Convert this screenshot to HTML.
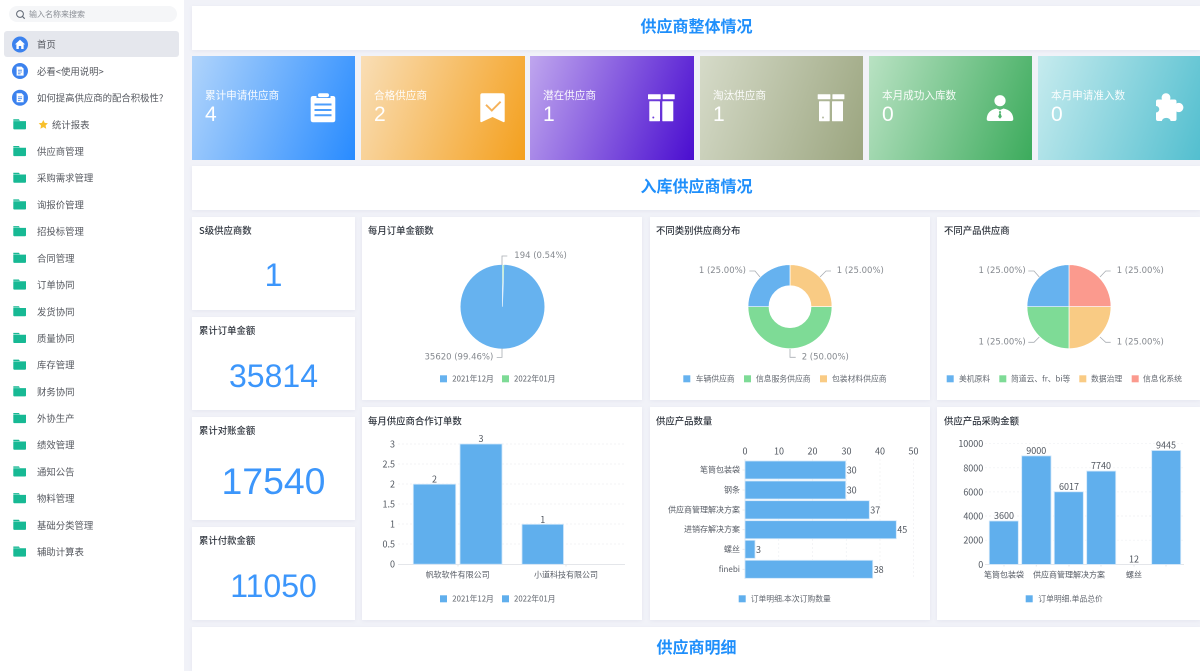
<!DOCTYPE html>
<html lang="zh"><head><meta charset="utf-8"><title>供应商</title>
<style>
*{box-sizing:border-box;margin:0;padding:0}
html,body{width:1200px;height:671px;overflow:hidden;background:#f1f2f8;font-family:"Liberation Sans","Noto Sans CJK SC",sans-serif}
#w{position:absolute;left:0;top:0;width:1200px;height:671px;overflow:hidden;filter:blur(.3px)}
.a{position:absolute}
#side{left:0;top:0;width:184px;height:671px;background:#fff}
.sel{left:4px;top:31px;width:175px;height:26px;background:#e5e7ed;border-radius:3px}
.search{left:9px;top:6px;width:168px;height:16px;background:#f5f6f8;border-radius:8px}
.p{background:#fff;box-shadow:0 1px 4px rgba(90,100,150,.08)}
.card{top:56px;height:104px;color:#fff}
.card b{position:absolute;left:13px;top:32px;font-weight:400;font-size:10.6px;line-height:15px;white-space:nowrap;opacity:.95;font-family:"Noto Sans CJK SC",sans-serif}
.card i{position:absolute;left:13px;top:46px;font-style:normal;font-size:21px;line-height:26px;font-family:"Liberation Sans",sans-serif}
.num{left:192px;width:163px;text-align:center;color:#3c96fb;font-family:"Liberation Sans",sans-serif}
svg{position:absolute;left:0;top:0}
text{dominant-baseline:central}
.si{font:9.4px "Noto Sans CJK SC",sans-serif;fill:#55585f}
.h{font:700 16px "Noto Sans CJK SC",sans-serif;fill:#1f8ffb;text-anchor:middle}
.t{font:500 9.4px "Noto Sans CJK SC",sans-serif;fill:#30363f}
.l{font:7.8px "Noto Sans CJK SC",sans-serif;fill:#62676f}
.pl{font:8.5px "DejaVu Sans",sans-serif;fill:#85898f}
.ax{font:9px "Noto Sans CJK SC",sans-serif;fill:#50565f}
.cn{font:8px "Noto Sans CJK SC",sans-serif;fill:#565b64}
.e{text-anchor:end}.m{text-anchor:middle}
.ld{fill:none;stroke:#a9adb3;stroke-width:.8}
.g{stroke:#eff0f3;stroke-width:.7;stroke-dasharray:2 2}
.b{fill:#60afed;stroke:#cfe6fa;stroke-width:.8}
</style></head><body>
<div id="w">
<div class="a" id="side"></div>
<div class="a search"></div>
<div class="a sel"></div>

<div class="a p" style="left:192px;top:6px;width:1008px;height:44px"></div>
<div class="a card" style="left:192px;width:163px;background:linear-gradient(110deg,#b0d4fb,#288bff)"><b>累计申请供应商</b><i>4</i></div>
<div class="a card" style="left:361px;width:164px;background:linear-gradient(110deg,#f9deb6,#f4a01e)"><b>合格供应商</b><i>2</i></div>
<div class="a card" style="left:530px;width:164px;background:linear-gradient(110deg,#bfa6ee,#4a0dd0)"><b>潜在供应商</b><i>1</i></div>
<div class="a card" style="left:700px;width:163px;background:linear-gradient(110deg,#d6dbc9,#9ba57f)"><b>淘汰供应商</b><i>1</i></div>
<div class="a card" style="left:869px;width:163px;background:linear-gradient(110deg,#b9e2c3,#3cab5c)"><b>本月成功入库数</b><i>0</i></div>
<div class="a card" style="left:1038px;width:170px;background:linear-gradient(110deg,#c6ebee,#4ebdce)"><b>本月申请准入数</b><i>0</i></div>

<div class="a p" style="left:192px;top:166px;width:1008px;height:44px"></div>
<div class="a p" style="left:192px;top:217px;width:163px;height:93px"></div>
<div class="a p" style="left:192px;top:317px;width:163px;height:93px"></div>
<div class="a p" style="left:192px;top:417px;width:163px;height:103px"></div>
<div class="a p" style="left:192px;top:527px;width:163px;height:93px"></div>
<div class="a p" style="left:362px;top:217px;width:280px;height:183px"></div>
<div class="a p" style="left:650px;top:217px;width:280px;height:183px"></div>
<div class="a p" style="left:937px;top:217px;width:263px;height:183px"></div>
<div class="a p" style="left:362px;top:407px;width:280px;height:213px"></div>
<div class="a p" style="left:650px;top:407px;width:280px;height:213px"></div>
<div class="a p" style="left:937px;top:407px;width:263px;height:213px"></div>
<div class="a p" style="left:192px;top:627px;width:1008px;height:44px"></div>

<div class="a num" style="top:252px;font-size:32px;line-height:46px">1</div>
<div class="a num" style="top:353px;font-size:32px;line-height:46px">35814</div>
<div class="a num" style="top:455px;font-size:37.400px;line-height:52px">17540</div>
<div class="a num" style="top:563px;font-size:32px;line-height:46px">11050</div>

<svg width="1200" height="671" viewBox="0 0 1200 671">
<defs>
<g id="f"><path d="M13.3 119.3h5.6l1 1.4H13.3z" fill="#17b994"/><path d="M13.3 121.1H26v7.4q0 .9-.9.9H14.2q-.9 0-.9-.9z" fill="#17b994"/></g>
<g id="d"><circle cx="20" cy="71" r="8" fill="#3c82ee"/><path d="M16.600 66.600h5l2 2v7h-7z" fill="#fff"/><path d="M18 70.200h4M18 72h4M18 73.800h2.600" stroke="#3c82ee" stroke-width=".8"/></g>
<g id="box"><rect x="648" y="94.300" width="12.700" height="5" rx=".5"/><rect x="662.700" y="94.300" width="12" height="5" rx=".5"/><rect x="649.300" y="101.300" width="10.700" height="20" rx=".5"/><rect x="662.300" y="101.300" width="11" height="20" rx=".5"/></g>
</defs>

<!-- sidebar -->
<circle cx="20" cy="14" r="3.400" fill="none" stroke="#5e6672" stroke-width="1"/><path d="M22.500 16.500l2.200 2.200" stroke="#5e6672" stroke-width="1.100"/>
<text x="29" y="14.500" style="font:8px 'Noto Sans CJK SC',sans-serif;fill:#8b8f96">输入名称来搜索</text>
<circle cx="20" cy="44.500" r="8" fill="#3c82ee"/><path d="M20 39.800l5 4.600h-1.400v4.600h-2.400v-3h-2.400v3h-2.400v-4.600H15z" fill="#fff"/>
<use href="#d"/><use href="#d" y="26.700"/>
<use href="#f"/><use href="#f" y="26.700"/><use href="#f" y="53.400"/><use href="#f" y="80.100"/><use href="#f" y="106.800"/><use href="#f" y="133.500"/><use href="#f" y="160.200"/><use href="#f" y="186.900"/><use href="#f" y="213.600"/><use href="#f" y="240.300"/><use href="#f" y="267"/><use href="#f" y="293.700"/><use href="#f" y="320.400"/><use href="#f" y="347.100"/><use href="#f" y="373.800"/><use href="#f" y="400.500"/><use href="#f" y="427.200"/>
<path d="M43.300 120l1.400 2.900 3.200.4-2.300 2.200.6 3.200-2.900-1.600-2.900 1.600.6-3.200-2.300-2.200 3.200-.4z" fill="#f8c02c"/>
<text class="si" x="37" y="44">首页</text>
<text class="si" x="37" y="71">必看&lt;使用说明&gt;</text>
<text class="si" x="37" y="97.500">如何提高供应商的配合积极性?</text>
<text class="si" x="52" y="124.500">统计报表</text>
<text class="si" x="37" y="151">供应商管理</text>
<text class="si" x="37" y="177.500">采购需求管理</text>
<text class="si" x="37" y="204.500">询报价管理</text>
<text class="si" x="37" y="231.200">招投标管理</text>
<text class="si" x="37" y="257.900">合同管理</text>
<text class="si" x="37" y="284.500">订单协同</text>
<text class="si" x="37" y="311.300">发货协同</text>
<text class="si" x="37" y="338">质量协同</text>
<text class="si" x="37" y="364.500">库存管理</text>
<text class="si" x="37" y="391.300">财务协同</text>
<text class="si" x="37" y="418">外协生产</text>
<text class="si" x="37" y="444.500">绩效管理</text>
<text class="si" x="37" y="471.500">通知公告</text>
<text class="si" x="37" y="498">物料管理</text>
<text class="si" x="37" y="524.800">基础分类管理</text>
<text class="si" x="37" y="551.500">辅助计算表</text>

<!-- section titles -->
<text class="h" x="696.500" y="25">供应商整体情况</text>
<text class="h" x="696.500" y="185">入库供应商情况</text>
<text class="h" x="696.500" y="646">供应商明细</text>

<!-- card icons -->
<path d="M313 96h3.500v2h14v-2h2.300q2.500 0 2.500 2.500v21.300q0 2.500-2.500 2.500h-19.600q-2.500 0-2.500-2.500V98.500q0-2.500 2.500-2.500z" fill="#fff"/>
<rect x="318" y="93.300" width="11" height="3.800" rx="1.900" fill="#fff"/>
<path d="M314.500 104.500h17M314.500 110h17M314.500 115.300h17" stroke="#4d9efc" stroke-width="2"/>
<path d="M480.300 95.300q0-2 2-2h20.400q2 0 2 2v25.700q0 1.700-1.500 1L492.500 117 481.800 122q-1.500.7-1.500-1z" fill="#fff"/>
<path d="M486 104.800l5.800 5.700 8.800-8.800" fill="none" stroke="#f5b25a" stroke-width="1.900"/>
<use href="#box" fill="#fff"/><circle cx="653.300" cy="117.500" r="1" fill="#6f3fdd"/>
<use href="#box" fill="#fff" x="169.700"/><circle cx="823" cy="117.500" r="1" fill="#b6bca3"/>
<circle cx="1000" cy="100.700" r="5.600" fill="#fff"/>
<path d="M986.700 119Q987 110.500 996.500 108.500L1000 110 1003.500 108.500Q1013 110.500 1013.300 119 1013.300 121 1011 121H989Q986.700 121 986.700 119z" fill="#fff"/>
<path d="M1000 110.500l1.200 1.600-.7 1 1.300 3.600-1.800 2-1.800-2 1.300-3.600-.7-1z" fill="#4fb36e"/>
<path d="M1158 99.500H1162A4.400 4.400 0 1 1 1170 99.500H1174.500Q1176.500 99.500 1176.500 101.500V103.500A4.600 4.600 0 1 1 1176.500 111.500V119Q1176.500 121 1174.500 121H1170.500A4 3 0 0 0 1162 121H1158Q1156 121 1156 119V112.500A3.200 3.200 0 0 0 1156 106V101.500Q1156 99.500 1158 99.500z" fill="#fff"/>

<!-- left card titles -->
<text class="t" x="199" y="230">S级供应商数</text>
<text class="t" x="199" y="330">累计订单金额</text>
<text class="t" x="199" y="430">累计对账金额</text>
<text class="t" x="199" y="540">累计付款金额</text>

<!-- chart titles -->
<text class="t" x="368" y="230">每月订单金额数</text>
<text class="t" x="656" y="230">不同类别供应商分布</text>
<text class="t" x="944" y="230">不同产品供应商</text>
<text class="t" x="368" y="420.300">每月供应商合作订单数</text>
<text class="t" x="656" y="420.300">供应产品数量</text>
<text class="t" x="944" y="420.300">供应产品采购金额</text>

<!-- pie 1 -->
<circle cx="502.500" cy="306.700" r="42" fill="#66b2ef"/>
<path d="M502.500 306.700V264.700A42 42 0 0 1 503.900 264.700z" fill="#7edb96" stroke="#fff" stroke-width=".6"/>
<path class="ld" d="M502 265v-9h5.300M502 348.400v9h-5.300"/>
<text class="pl" x="514.300" y="256">194 (0.54%)</text>
<text class="pl e" x="493.300" y="357.300">35620 (99.46%)</text>
<rect x="440" y="375.300" width="7" height="7" fill="#66b2ef"/><text class="l" x="452.300" y="379">2021年12月</text>
<rect x="502" y="375.300" width="7" height="7" fill="#7edb96"/><text class="l" x="514" y="379">2022年01月</text>

<!-- donut -->
<g stroke="#fff" stroke-width=".7">
<path d="M790 306.700V264.700A42 42 0 0 1 832 306.700H811A21 21 0 0 0 790 285.700z" fill="#f9cb84"/>
<path d="M832 306.700A42 42 0 0 1 748 306.700H769A21 21 0 0 0 811 306.700z" fill="#7edb96"/>
<path d="M748 306.700A42 42 0 0 1 790 264.700V285.700A21 21 0 0 0 769 306.700z" fill="#66b2ef"/>
</g>
<path class="ld" d="M820 277l6-6h5M760 277l-5-6h-5.700M790 349v8.300h5.700"/>
<text class="pl" x="836.700" y="271">1 (25.00%)</text>
<text class="pl e" x="746" y="271">1 (25.00%)</text>
<text class="pl" x="801.700" y="357.300">2 (50.00%)</text>
<rect x="683.300" y="375.300" width="7" height="7" fill="#66b2ef"/><text class="l" x="695.700" y="379">车辆供应商</text>
<rect x="744" y="375.300" width="7" height="7" fill="#7edb96"/><text class="l" x="756" y="379">信息服务供应商</text>
<rect x="820" y="375.300" width="7" height="7" fill="#f9cb84"/><text class="l" x="832" y="379">包装材料供应商</text>

<!-- pie 3 -->
<g stroke="#fff" stroke-width=".7">
<path d="M1069 306.700V264.700A42 42 0 0 1 1111 306.700z" fill="#fb9a8e"/>
<path d="M1069 306.700H1111A42 42 0 0 1 1069 348.700z" fill="#f9cb84"/>
<path d="M1069 306.700V348.700A42 42 0 0 1 1027 306.700z" fill="#7edb96"/>
<path d="M1069 306.700H1027A42 42 0 0 1 1069 264.700z" fill="#66b2ef"/>
</g>
<path class="ld" d="M1100 277l5.700-6h5M1039.300 277l-5.300-6h-5.700M1100 337l5.700 5.300h5M1039.300 337l-5.300 5.300h-5.700"/>
<text class="pl" x="1116.700" y="271">1 (25.00%)</text>
<text class="pl e" x="1025.700" y="271">1 (25.00%)</text>
<text class="pl" x="1116.700" y="342.300">1 (25.00%)</text>
<text class="pl e" x="1025.700" y="342.300">1 (25.00%)</text>
<rect x="946.700" y="375.300" width="7" height="7" fill="#66b2ef"/><text class="l" x="959" y="379">美机原料</text>
<rect x="999.300" y="375.300" width="7" height="7" fill="#7edb96"/><text class="l" x="1011" y="379">简道云、fr、bi等</text>
<rect x="1079.300" y="375.300" width="7" height="7" fill="#f9cb84"/><text class="l" x="1091" y="379">数据治理</text>
<rect x="1131.700" y="375.300" width="7" height="7" fill="#fb9a8e"/><text class="l" x="1143" y="379">信息化系统</text>

<!-- bar 1 -->
<path class="g" d="M398 444H625M398 464H625M398 484H625M398 504H625M398 524H625M398 544H625"/>
<path d="M398 564.500H625M458 564.500v2M566 564.500v2" stroke="#e4e6ea" stroke-width="1"/>
<rect class="b" x="413.300" y="484.200" width="42.400" height="80"/>
<rect class="b" x="460" y="444" width="42" height="120.200"/>
<rect class="b" x="522" y="524.300" width="41.500" height="40"/>
<text class="ax m" x="434.500" y="479">2</text><text class="ax m" x="481" y="438.700">3</text><text class="ax m" x="542.700" y="519.300">1</text>
<text class="ax e" x="395" y="444">3</text><text class="ax e" x="395" y="464">2.5</text><text class="ax e" x="395" y="484">2</text><text class="ax e" x="395" y="504">1.5</text><text class="ax e" x="395" y="524">1</text><text class="ax e" x="395" y="544">0.5</text><text class="ax e" x="395" y="564">0</text>
<text class="cn m" x="457.700" y="575">帆软软件有限公司</text><text class="cn m" x="566" y="575">小道科技有限公司</text>
<rect x="440" y="595.300" width="7" height="7" fill="#60afed"/><text class="l" x="452.300" y="599">2021年12月</text>
<rect x="502" y="595.300" width="7" height="7" fill="#60afed"/><text class="l" x="514" y="599">2022年01月</text>

<!-- bar 2 -->
<path class="g" d="M778.700 459V579M812.500 459V579M846.300 459V579M880 459V579M913.500 459V579"/>
<path d="M745 459V579M742.500 470H745M742.500 490H745M742.500 510H745M742.500 529.700H745M742.500 549.300H745M742.500 569.300H745" stroke="#e4e6ea" stroke-width=".8"/>
<rect class="b" x="745" y="461" width="100.700" height="18"/>
<rect class="b" x="745" y="481" width="100.700" height="18"/>
<rect class="b" x="745" y="500.700" width="124.300" height="18.300"/>
<rect class="b" x="745" y="520.700" width="151.300" height="18"/>
<rect class="b" x="745" y="540.300" width="10" height="18"/>
<rect class="b" x="745" y="560.300" width="127.700" height="18"/>
<text class="ax m" x="745" y="451">0</text><text class="ax m" x="779" y="451">10</text><text class="ax m" x="812.500" y="451">20</text><text class="ax m" x="846.500" y="451">30</text><text class="ax m" x="880" y="451">40</text><text class="ax m" x="913.500" y="451">50</text>
<text class="cn e" x="740" y="470">笔筒包装袋</text><text class="cn e" x="740" y="490">钢条</text><text class="cn e" x="740" y="510">供应商管理解决方案</text><text class="cn e" x="740" y="529.700">进销存解决方案</text><text class="cn e" x="740" y="549.300">螺丝</text><text class="cn e" x="740" y="569.300">finebi</text>
<text class="ax" x="846.700" y="470">30</text><text class="ax" x="846.700" y="490">30</text><text class="ax" x="870.300" y="510">37</text><text class="ax" x="897.300" y="529.700">45</text><text class="ax" x="756" y="549.300">3</text><text class="ax" x="873.700" y="569.300">38</text>
<rect x="738.700" y="595.300" width="7" height="7" fill="#60afed"/><text class="l" x="750.700" y="599">订单明细.本次订购数量</text>

<!-- bar 3 -->
<path class="g" d="M985 443.700H1184M985 467.800H1184M985 491.900H1184M985 516H1184M985 540.200H1184"/>
<path d="M985 564.500H1184M1004 564.500v2M1036.300 564.500v2M1069 564.500v2M1101 564.500v2M1134 564.500v2M1166 564.500v2" stroke="#e4e6ea" stroke-width="1"/>
<rect class="b" x="989.300" y="521" width="29" height="43.400"/>
<rect class="b" x="1021.700" y="455.900" width="29.300" height="108.500"/>
<rect class="b" x="1054.300" y="491.800" width="29" height="72.600"/>
<rect class="b" x="1086.700" y="471.100" width="29" height="93.300"/>
<rect class="b" x="1151.700" y="450.500" width="29" height="113.900"/>
<text class="ax m" x="1004" y="515.500">3600</text><text class="ax m" x="1036.300" y="450.500">9000</text><text class="ax m" x="1069" y="486.300">6017</text><text class="ax m" x="1101" y="465.700">7740</text><text class="ax m" x="1134" y="559">12</text><text class="ax m" x="1166" y="445">9445</text>
<text class="ax e" x="983.300" y="443.700">10000</text><text class="ax e" x="983.300" y="467.800">8000</text><text class="ax e" x="983.300" y="491.900">6000</text><text class="ax e" x="983.300" y="516">4000</text><text class="ax e" x="983.300" y="540.200">2000</text><text class="ax e" x="983.300" y="564.300">0</text>
<text class="cn m" x="1004" y="575">笔筒包装袋</text><text class="cn m" x="1069" y="575">供应商管理解决方案</text><text class="cn m" x="1134" y="575">螺丝</text>
<rect x="1025.700" y="595.300" width="7" height="7" fill="#60afed"/><text class="l" x="1038.300" y="599">订单明细.单品总价</text>
</svg>
</div>
</body></html>
